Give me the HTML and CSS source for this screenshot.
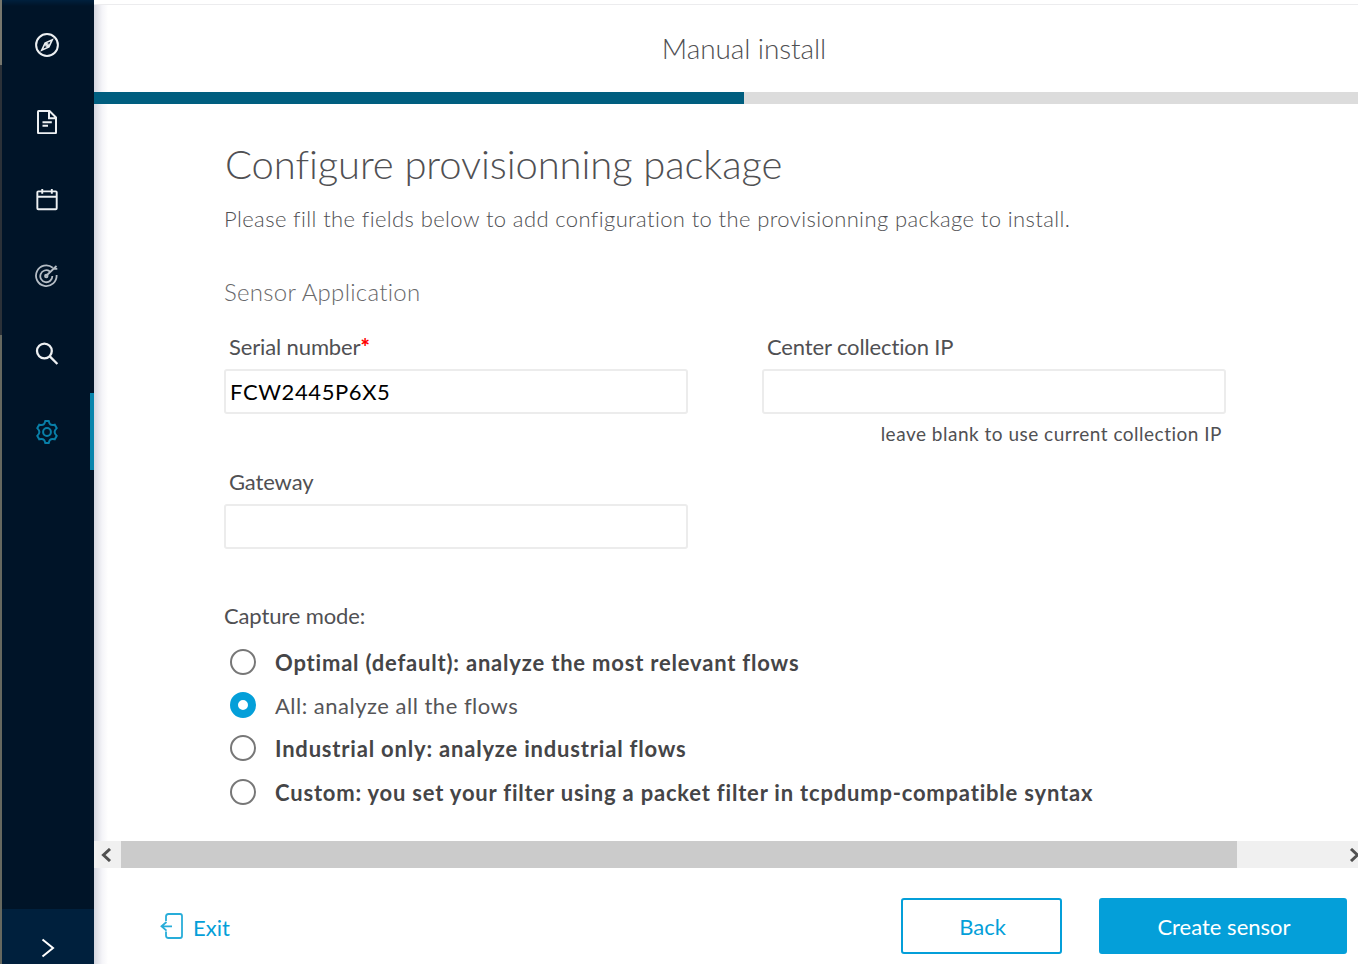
FILE: index.html
```html
<!DOCTYPE html>
<html lang="en">
<head>
<meta charset="utf-8">
<title>Manual install</title>
<link rel="stylesheet" href="styles.css">
</head>
<body>
<div class="app">
  <div class="edge"></div>
  <nav class="sidebar">
    <a class="nav-item"><svg class="icon" viewBox="0 0 24 24"><circle cx="12" cy="12" r="10.9"/><path d="M17.2 6.8l-3.3 7.1-7.1 3.3 3.3-7.1zM9.8 9.8l4.4 4.4" stroke-width="1.6"/><circle cx="12" cy="12" r="1.3" stroke-width="1.2"/></svg></a>
    <a class="nav-item"><svg class="icon" viewBox="0 0 24 24"><path d="M14.5 1H3.6Q3 1 3 1.800v20.600q0 .8.8.8h16.400q.8 0 .8-.8V7.500zM14 1.500v6.800h6.600M7.500 12.300h9.300M7.500 15.700h5.500"/></svg></a>
    <a class="nav-item"><svg class="icon icon-calendar" viewBox="0 0 24 24"><path d="M2.400 3.500h18.200q1 0 1 1v16.600q0 1-1 1H2.400q-1 0-1-1V4.500q0-1 1-1zM1.500 9.200h20M6.500 1v5M16.500 1v5"/></svg></a>
    <a class="nav-item nav-item-target"><svg class="icon icon-target" viewBox="0 0 24 24"><path d="M17.800 3.700A10.300 10.300 0 1 0 21.600 11M14.600 7.200A6 6 0 1 0 17.300 12M11 12l10.500-10M18.700 4.800h3.600"/><circle cx="11.300" cy="12" r="1.300"/></svg></a>
    <a class="nav-item nav-item-search"><svg class="icon" viewBox="0 0 24 24"><circle cx="9.400" cy="9" r="7.400"/><path d="M14.800 14.400l7.600 7.600"/></svg></a>
    <a class="nav-item nav-item-active"><svg class="icon" viewBox="0 0 24 24"><path d="M10.300 1h3.400q.8 2.900 1.600 3.400 1.200.8 4.400.3l2 3.400q-2.100 2.200-2.100 3.900t2.100 3.900l-2 3.400q-3.200-.5-4.400.3-.8.500-1.600 3.400h-3.400q-.8-2.900-1.600-3.400-1.200-.8-4.400-.3l-2-3.400q2.100-2.200 2.100-3.900T2.300 8.100l2-3.400q3.200.5 4.400-.3.800-.5 1.600-3.400z"/><circle cx="12" cy="12" r="3.900"/></svg></a>
    <a class="expand"><svg class="chevron" viewBox="0 0 14 20"><path d="M1.500 1.500L12 10 1.500 18.500"/></svg></a>
  </nav>
  <main class="panel">
    <header class="header">Manual install</header>
    <div class="progress"><div class="progress-fill"></div></div>
    <section class="content">
      <h1 class="title">Configure provisionning package</h1>
      <p class="intro">Please fill the fields below to add configuration to the provisionning package to install.</p>
      <h2 class="subtitle">Sensor Application</h2>
      <div class="fields">
        <div class="field">
          <label class="label" for="serial">Serial number<span class="required">*</span></label>
          <input class="input" id="serial" value="FCW2445P6X5">
        </div>
        <div class="field">
          <label class="label" for="center">Center collection IP</label>
          <input class="input" id="center">
          <p class="hint">leave blank to use current collection IP</p>
        </div>
        <div class="field">
          <label class="label" for="gateway">Gateway</label>
          <input class="input" id="gateway">
        </div>
      </div>
      <p class="mode-title">Capture mode:</p>
      <ul class="modes">
        <li class="mode"><i class="radio"></i><span>Optimal (default): analyze the most relevant flows</span></li>
        <li class="mode mode-selected"><i class="radio"></i><span>All: analyze all the flows</span></li>
        <li class="mode"><i class="radio"></i><span>Industrial only: analyze industrial flows</span></li>
        <li class="mode"><i class="radio"></i><span>Custom: you set your filter using a packet filter in tcpdump-compatible syntax</span></li>
      </ul>
    </section>
    <div class="scrollbar">
      <svg class="arrow" viewBox="0 0 12 14"><path d="M10 1L3.500 7l6.500 6"/></svg>
      <div class="thumb"></div>
      <svg class="arrow arrow-right" viewBox="0 0 12 14"><path d="M2 1l6.500 6L2 13"/></svg>
    </div>
    <footer class="footer">
      <a class="exit"><svg class="exit-icon" viewBox="0 0 24 26"><path d="M6 8V3.500q0-2.500 2.500-2.500H20q2 0 2 2v20q0 2-2 2H8.500Q6 25 6 22.500V18.500M12 13.300H2M6.500 9l-5 4.300 5 4.300"/></svg><span>Exit</span></a>
      <button class="btn btn-outline">Back</button>
      <button class="btn btn-primary">Create sensor</button>
    </footer>
  </main>
</div>
</body>
</html>
```
FILE: styles.css
```css
* { box-sizing: border-box; }
body { margin: 0; font-family: Lato, sans-serif; color: #505053; background: #fff; overflow: hidden; }
h1, h2, p, ul { margin: 0; padding: 0; font-weight: 400; }
.app { display: flex; width: 1358px; height: 964px; }
.edge { width: 2px; background: linear-gradient(#77776d 0 65px, #2b3138 65px 335px, #66685f 335px 100%); }
.sidebar { display: flex; flex-direction: column; width: 92px; background: linear-gradient(#00203d, #001428 6px); padding-top: 6px; }
.nav-item { display: flex; align-items: center; justify-content: center; height: 77.5px; padding-right: 2px; color: #edf0f2; }
.nav-item-target { padding-bottom: 2px; padding-right: 3px; color: #b5bdc5; }
.nav-item-search { padding-bottom: 1px; }
.nav-item-active { height: 77px; margin-top: -1px; padding: 1px 0 0 2px; color: #087fa8; border-right: 4px solid #0784ac; }
.icon { width: 24px; height: 24px; fill: none; stroke: currentColor; stroke-width: 2; }
.icon-calendar { width: 23px; height: 23px; }
.icon-target { stroke-width: 1.8; }
.nav-item-search .icon { stroke-width: 2.3; }
.expand { display: flex; align-items: flex-end; justify-content: center; height: 55px; margin-top: auto; padding-bottom: 6px; background: #00203d; }
.chevron { width: 14px; height: 20px; fill: none; stroke: #fff; stroke-width: 2; }
.panel { display: flex; flex-direction: column; width: 1264px; background: linear-gradient(90deg, #d4d6df, #f4f4f8 8px, #fff 14px); }
.header { height: 92px; padding: 2px 0 0 36px; display: flex; justify-content: center; font-size: 28px; font-weight: 300; line-height: 92px; letter-spacing: -.1px; background: linear-gradient(#fff 4px, #ececee 4px 5px, transparent 5px); }
.progress { height: 12px; background: #dcdcdc; }
.progress-fill { width: 650px; height: 12px; background: #005e7f; }
.content { height: 737px; padding: 34px 0 0 130px; }
.title { padding-left: 1px; font-size: 40px; font-weight: 300; line-height: 52px; letter-spacing: -.1px; }
.intro { margin-top: 10px; font-size: 22px; font-weight: 300; line-height: 38px; letter-spacing: .39px; }
.subtitle { margin-top: 38px; font-size: 24px; font-weight: 300; line-height: 32px; letter-spacing: .28px; color: #68686a; }
.fields { display: grid; grid-template-columns: 464px 464px; column-gap: 74px; margin-top: 19px; }
.field { height: 134.500px; }
.label { display: block; height: 42px; padding-left: 5px; font-size: 22px; line-height: 40px; letter-spacing: -.13px; }
.required { color: #f00; font-weight: 900; }
.input { display: block; width: 464px; height: 45px; padding: 0 4px; border: 2px solid #ececec; border-radius: 3px; font: 400 22px Lato, sans-serif; letter-spacing: .6px; color: #000; background: #fff; }
.hint { padding-right: 4px; text-align: right; font-size: 19px; line-height: 40px; letter-spacing: .5px; }
.mode-title { margin-top: 2px; font-size: 22px; line-height: 36px; letter-spacing: -.13px; }
.modes { margin-top: 6px; list-style: none; }
.mode { display: flex; align-items: center; height: 43.400px; gap: 19px; padding-left: 6px; font-size: 22px; font-weight: 700; letter-spacing: .8px; color: #454547; }
.mode span { padding-top: 1px; }
.radio { width: 26px; height: 26px; border: 2px solid #777; border-radius: 50%; background: #fff; }
.mode-selected { font-weight: 400; letter-spacing: .5px; color: #555558; }
.mode-selected .radio { border: 8px solid #049fd9; }
.scrollbar { display: flex; align-items: center; height: 27px; overflow: hidden; background: #f0f0f0; }
.arrow { flex: none; width: 12px; height: 14px; margin: 0 9px 0 6px; fill: none; stroke: #505050; stroke-width: 3; }
.thumb { flex: none; width: 1116px; height: 27px; background: #cbcbcb; }
.arrow-right { margin: 0 0 0 112px; }
.footer { display: flex; height: 96px; padding: 30px 11px 10px 66px; color: #049fd9; font-size: 22px; }
.exit { display: flex; align-items: center; gap: 9px; margin-right: auto; padding-top: 2px; }
.exit-icon { width: 24px; height: 26px; margin-top: -3px; fill: none; stroke: #28add9; stroke-width: 1.8; }
.btn { height: 56px; padding: 1px 0 0 2px; border: 2px solid #049fd9; border-radius: 3px; font: 22px Lato, sans-serif; color: #049fd9; background: #fff; }
.btn-outline { width: 161px; margin-right: 37px; }
.btn-primary { width: 248px; color: #fff; background: #049fd9; }
```
